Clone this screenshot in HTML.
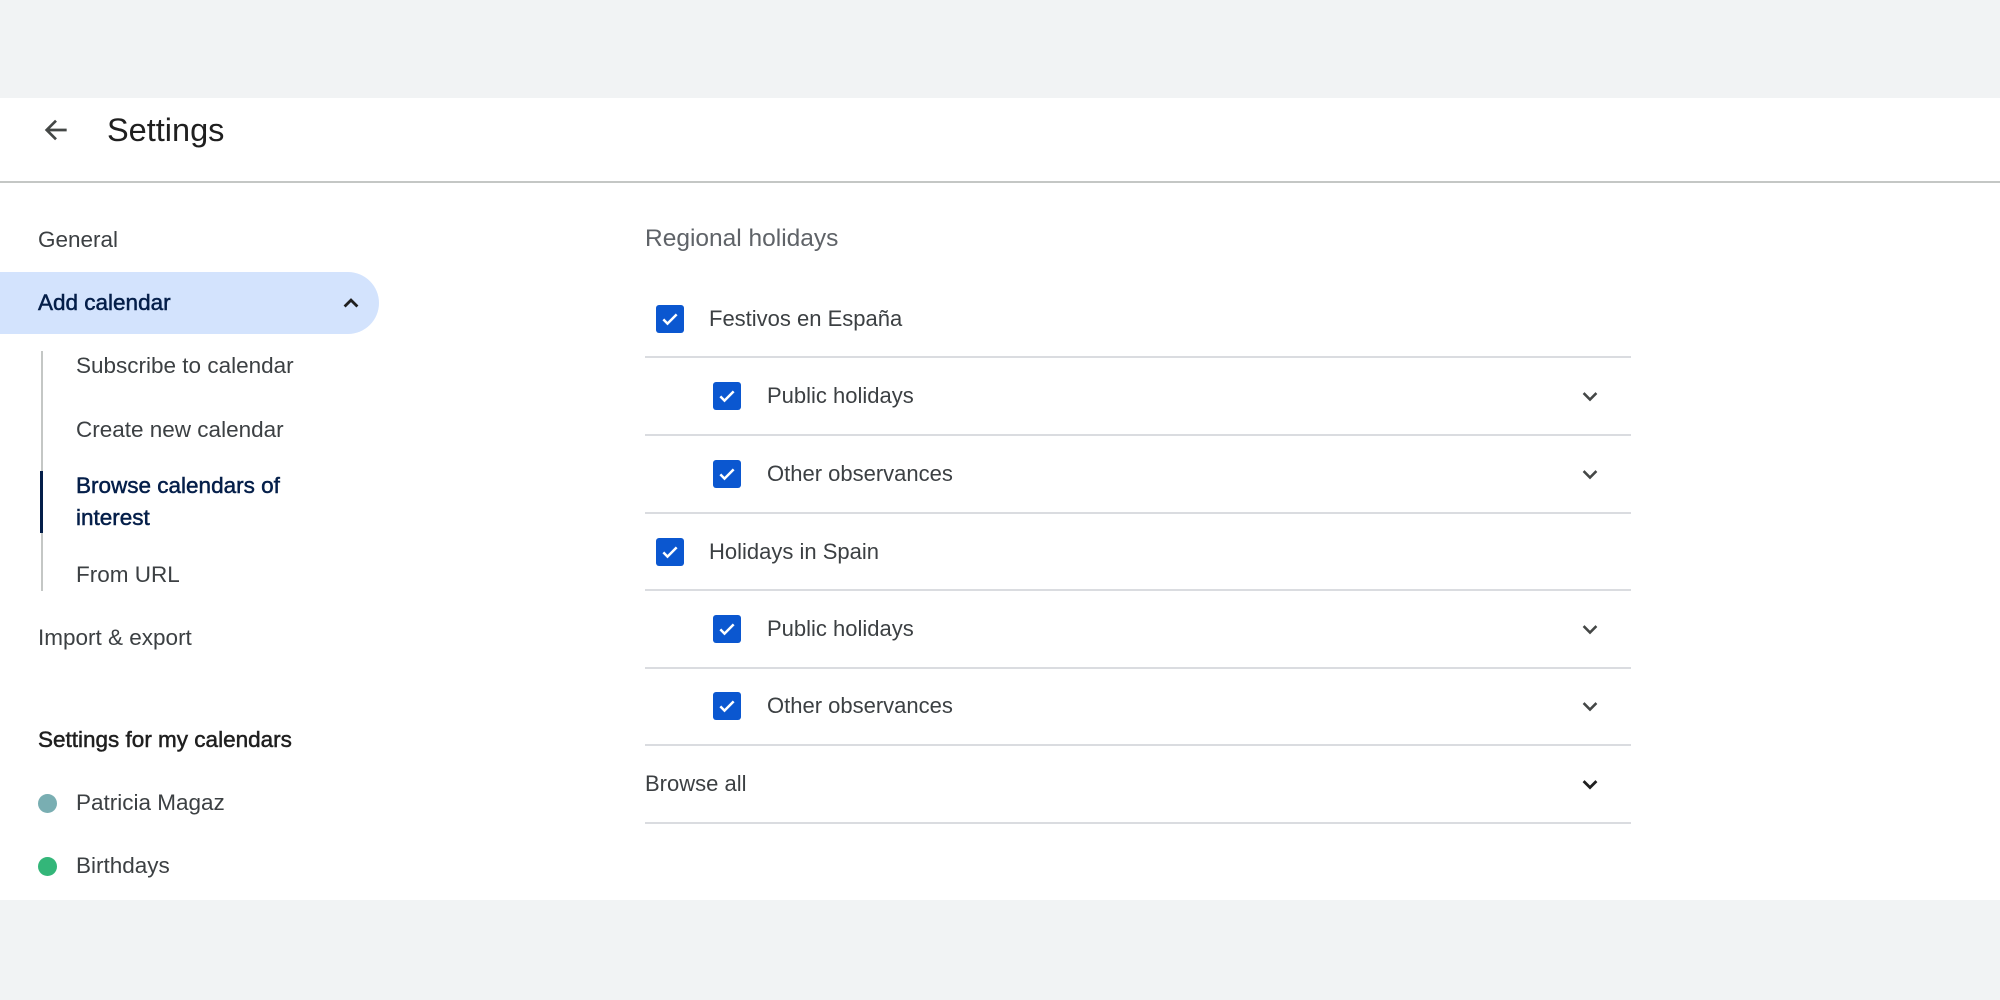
<!DOCTYPE html>
<html><head><meta charset="utf-8"><style>
body{margin:0;width:2000px;height:1000px;background:#f1f3f4;position:relative;overflow:hidden;font-family:"Liberation Sans",Arial,sans-serif;color:#3c4043}
.w{position:absolute;left:0;top:98px;width:2000px;height:802px;background:#fff}
.t{position:absolute;height:30px;line-height:30px;font-size:22.5px;white-space:nowrap}
.m{font-size:22px}
.b{color:#041e49;-webkit-text-stroke:0.5px #041e49}
.hl{position:absolute;left:0;top:272px;width:379px;height:62px;background:#d3e3fd;border-radius:0 31px 31px 0}
.cb{position:absolute;width:28px;height:28px;background:#0b57d0;border-radius:3px}
.cb svg{position:absolute;left:4px;top:4px}
.ln{position:absolute;left:645px;width:986px;height:2px;background:#dadce0}
.ch{position:absolute;left:1576px}
.dot{position:absolute;left:38px;width:19px;height:19px;border-radius:50%}
</style></head><body>
<div class="w"></div>
<svg style="position:absolute;left:40px;top:114px" width="32" height="32" viewBox="0 0 24 24"><path d="M20 12H5.5M12 5l-7 7 7 7" stroke="#444746" stroke-width="2" fill="none"/></svg>
<div class="t" style="left:107px;top:112px;height:36px;line-height:36px;font-size:32.5px;color:#1f1f1f">Settings</div>
<div style="position:absolute;left:0;top:181px;width:2000px;height:2px;background:#c4c7c5"></div>

<div class="t" style="left:38px;top:225px">General</div>
<div class="hl"></div>
<div class="t b" style="left:38px;top:288px">Add calendar</div>
<svg style="position:absolute;left:337px;top:289px" width="28" height="28" viewBox="0 0 24 24"><path d="M6.5 15l5.5-5.5 5.5 5.5" stroke="#1f1f1f" stroke-width="2.4" fill="none"/></svg>
<div style="position:absolute;left:41px;top:351px;width:2px;height:240px;background:#c4c7c5"></div>
<div style="position:absolute;left:40px;top:471px;width:3px;height:62px;background:#041e49"></div>
<div class="t" style="left:76px;top:351px">Subscribe to calendar</div>
<div class="t" style="left:76px;top:415px">Create new calendar</div>
<div class="t b" style="left:76px;top:471px">Browse calendars of</div>
<div class="t b" style="left:76px;top:503px">interest</div>
<div class="t" style="left:76px;top:560px">From URL</div>
<div class="t" style="left:38px;top:623px">Import &amp; export</div>
<div class="t" style="left:38px;top:725px;color:#1f1f1f;-webkit-text-stroke:0.5px #1f1f1f">Settings for my calendars</div>
<div class="dot" style="top:794px;background:#79aeb2"></div>
<div class="t" style="left:76px;top:788px">Patricia Magaz</div>
<div class="dot" style="top:857px;background:#33b679"></div>
<div class="t" style="left:76px;top:851px">Birthdays</div>

<div class="t" style="left:645px;top:224px;font-size:24.5px;color:#5f6368">Regional holidays</div>

<div class="cb" style="left:656px;top:305px"><svg width="20" height="20" viewBox="0 0 24 24"><path d="M4 12.5l5 5L20 6.5" stroke="#fff" stroke-width="3" fill="none"/></svg></div>
<div class="t m" style="left:709px;top:304px">Festivos en España</div>
<div class="ln" style="top:356px"></div>

<div class="cb" style="left:713px;top:382px"><svg width="20" height="20" viewBox="0 0 24 24"><path d="M4 12.5l5 5L20 6.5" stroke="#fff" stroke-width="3" fill="none"/></svg></div>
<div class="t m" style="left:767px;top:381px">Public holidays</div>
<svg class="ch" style="top:382px" width="28" height="28" viewBox="0 0 24 24"><path d="M6.5 9.5l5.5 5.5 5.5-5.5" stroke="#444746" stroke-width="2.2" fill="none"/></svg>
<div class="ln" style="top:434px"></div>

<div class="cb" style="left:713px;top:460px"><svg width="20" height="20" viewBox="0 0 24 24"><path d="M4 12.5l5 5L20 6.5" stroke="#fff" stroke-width="3" fill="none"/></svg></div>
<div class="t m" style="left:767px;top:459px">Other observances</div>
<svg class="ch" style="top:460px" width="28" height="28" viewBox="0 0 24 24"><path d="M6.5 9.5l5.5 5.5 5.5-5.5" stroke="#444746" stroke-width="2.2" fill="none"/></svg>
<div class="ln" style="top:512px"></div>

<div class="cb" style="left:656px;top:538px"><svg width="20" height="20" viewBox="0 0 24 24"><path d="M4 12.5l5 5L20 6.5" stroke="#fff" stroke-width="3" fill="none"/></svg></div>
<div class="t m" style="left:709px;top:537px">Holidays in Spain</div>
<div class="ln" style="top:589px"></div>

<div class="cb" style="left:713px;top:615px"><svg width="20" height="20" viewBox="0 0 24 24"><path d="M4 12.5l5 5L20 6.5" stroke="#fff" stroke-width="3" fill="none"/></svg></div>
<div class="t m" style="left:767px;top:614px">Public holidays</div>
<svg class="ch" style="top:615px" width="28" height="28" viewBox="0 0 24 24"><path d="M6.5 9.5l5.5 5.5 5.5-5.5" stroke="#444746" stroke-width="2.2" fill="none"/></svg>
<div class="ln" style="top:667px"></div>

<div class="cb" style="left:713px;top:692px"><svg width="20" height="20" viewBox="0 0 24 24"><path d="M4 12.5l5 5L20 6.5" stroke="#fff" stroke-width="3" fill="none"/></svg></div>
<div class="t m" style="left:767px;top:691px">Other observances</div>
<svg class="ch" style="top:692px" width="28" height="28" viewBox="0 0 24 24"><path d="M6.5 9.5l5.5 5.5 5.5-5.5" stroke="#444746" stroke-width="2.2" fill="none"/></svg>
<div class="ln" style="top:744px"></div>

<div class="t m" style="left:645px;top:769px">Browse all</div>
<svg class="ch" style="top:770px" width="28" height="28" viewBox="0 0 24 24"><path d="M6.5 9.5l5.5 5.5 5.5-5.5" stroke="#1f1f1f" stroke-width="2.4" fill="none"/></svg>
<div class="ln" style="top:822px"></div>
</body></html>
